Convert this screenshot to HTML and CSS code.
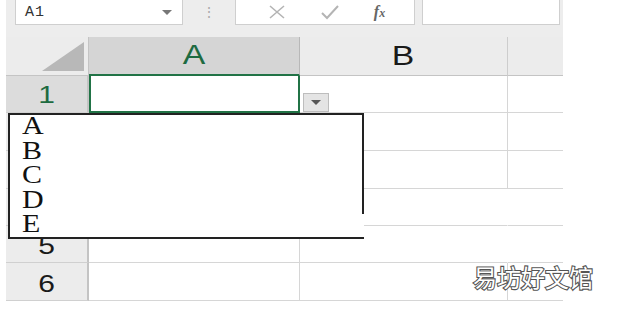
FILE: index.html
```html
<!DOCTYPE html>
<html lang="zh-CN">
<head>
    <meta charset="UTF-8">
    <meta name="viewport" content="width=device-width, initial-scale=1.0">
    <title>Data validation list</title>
    <link rel="stylesheet" href="styles.css">
</head>
<body>

    <div class="sheet">
        <div class="formula-bar">
            <div class="name-box">
                <span class="cell-ref">A1</span>
                <span class="caret"></span>
            </div>
            <div class="grip">&#8942;</div>
            <div class="fx-box">
                <svg class="icon" width="20" height="16" viewBox="0 0 20 16">
                    <path d="M3 2 L17 14 M17 2 L3 14" stroke="#b4b4b4" stroke-width="1.6" fill="none"/>
                </svg>
                <svg class="icon" width="20" height="16" viewBox="0 0 20 16">
                    <path d="M2 9 L7 14 L18 2" stroke="#b4b4b4" stroke-width="2" fill="none"/>
                </svg>
                <span class="fx">f<small>x</small></span>
            </div>
            <div class="input-box"></div>
        </div>

        <div class="grid">
            <div class="corner"><span class="tri"></span></div>
            <div class="col-head active"><span class="stretch">A</span></div>
            <div class="col-head"><span class="stretch">B</span></div>
            <div class="col-head last"></div>

            <div class="row-head active"><span class="stretch">1</span></div>
            <div class="cell selected"></div>
            <div class="cell"></div>
            <div class="cell last"></div>

            <!-- rows 2-4 sit under the open list -->
            <div class="row-head"></div>
            <div class="cell"></div>
            <div class="cell"></div>
            <div class="cell last"></div>

            <div class="row-head"></div>
            <div class="cell"></div>
            <div class="cell"></div>
            <div class="cell last"></div>

            <div class="row-head"></div>
            <div class="cell"></div>
            <div class="cell gap"></div>
            <div class="cell last"></div>

            <div class="row-head"><span class="stretch">5</span></div>
            <div class="cell"></div>
            <div class="cell gap"></div>
            <div class="cell last"></div>

            <div class="row-head"><span class="stretch">6</span></div>
            <div class="cell"></div>
            <div class="cell"></div>
            <div class="cell last"></div>
        </div>

        <div class="drop-btn"><span class="caret dark"></span></div>

        <div class="list-box">
            <ul class="options">
                <li><span class="stretch">A</span></li>
                <li><span class="stretch">B</span></li>
                <li><span class="stretch">C</span></li>
                <li><span class="stretch">D</span></li>
                <li><span class="stretch">E</span></li>
            </ul>
        </div>

        <div class="watermark">易坊好文馆</div>
    </div>

</body>
</html>
```

FILE: styles.css
```css
* {
    margin: 0;
    padding: 0;
    box-sizing: border-box;
}
body {
    background: white;
    font-family: "Liberation Sans", Arial, sans-serif;
    width: 620px;
    height: 309px;
    overflow: hidden;
}
.sheet {
    position: relative;
    margin-left: 6px;
    width: 557px;
    background: #ededed;
}
.formula-bar {
    display: flex;
    height: 37px;
    padding-left: 9px;
}
.name-box {
    width: 168px;
    height: 25px;
    background: white;
    border: 1px solid #cfcfcf;
    border-top: none;
    display: flex;
    align-items: center;
    justify-content: space-between;
    padding: 0 10px 0 9px;
}
.cell-ref {
    font-family: "Liberation Mono", monospace;
    font-size: 15px;
    letter-spacing: 1px;
    color: #333;
}
.caret {
    width: 0;
    height: 0;
    border-left: 5px solid transparent;
    border-right: 5px solid transparent;
    border-top: 5px solid #777;
}
.caret.dark {
    border-top-color: #555;
}
.grip {
    width: 52px;
    text-align: center;
    color: #aaa;
    font-size: 14px;
    line-height: 24px;
}
.fx-box {
    width: 180px;
    height: 25px;
    background: white;
    border: 1px solid #cfcfcf;
    border-top: none;
    display: flex;
    align-items: center;
    justify-content: space-around;
    padding: 0 12px 0 14px;
}
.fx {
    font-family: "Liberation Serif", serif;
    font-style: italic;
    font-weight: bold;
    font-size: 16px;
    color: #666;
}
.fx small {
    font-size: 12px;
}
.input-box {
    width: 138px;
    height: 25px;
    margin-left: 7px;
    background: white;
    border: 1px solid #cfcfcf;
    border-top: none;
}
.grid {
    display: grid;
    grid-template-columns: 83px 211px 208px 55px;
    grid-template-rows: 39px 37px 38px 38px 37px 37px 38px;
    background: white;
}
.corner {
    position: relative;
    background: #ececec;
    border-right: 1px solid #c4c4c4;
    border-bottom: 1px solid #c4c4c4;
}
.tri {
    position: absolute;
    right: 4px;
    bottom: 4px;
    width: 0;
    height: 0;
    border-left: 42px solid transparent;
    border-bottom: 29px solid #b8b8b8;
}
.col-head {
    background: #ececec;
    border-right: 1px solid #cdcdcd;
    border-bottom: 1px solid #c4c4c4;
    display: flex;
    align-items: center;
    justify-content: center;
    font-size: 27px;
    color: #1a1a1a;
}
.col-head.active {
    background: #d5d5d5;
    color: #1e6b41;
    border-right-color: #b8b8b8;
    border-bottom: 2px solid #217346;
}
.col-head.last {
    border-right: none;
}
.row-head {
    background: #ececec;
    border-right: 2px solid #c4c4c4;
    border-bottom: 1px solid #d0d0d0;
    display: flex;
    align-items: center;
    justify-content: center;
    padding-top: 4px;
    font-size: 24px;
    color: #1a1a1a;
}
.row-head.active {
    background: #dcdcdc;
    color: #1e6b41;
    padding-top: 2px;
}
.stretch {
    display: inline-block;
    transform: scaleX(1.25);
}
.cell {
    border-right: 1px solid #d6d6d6;
    border-bottom: 1px solid #d6d6d6;
}
.cell.gap {
    border-right-color: white;
}
.cell.last {
    border-right: none;
}
.cell.selected {
    border: 2px solid #217346;
    border-top: none;
}
.drop-btn {
    position: absolute;
    left: 297px;
    top: 93px;
    width: 26px;
    height: 19px;
    background: #e4e4e4;
    border: 1px solid #bdbdbd;
    display: flex;
    align-items: center;
    justify-content: center;
}
.list-box {
    position: absolute;
    left: 2px;
    top: 113px;
    width: 356px;
    height: 126px;
    background: white;
    border: 2px solid #222;
    border-right: none;
}
.list-box::after {
    content: "";
    position: absolute;
    right: 0;
    top: -2px;
    width: 2px;
    height: 101px;
    background: #222;
}
.options {
    list-style: none;
    margin-top: -1px;
    padding-left: 12px;
    font-family: "Liberation Serif", "Times New Roman", serif;
    font-size: 25px;
    line-height: 24.5px;
    color: #111;
}
.options .stretch {
    transform: scaleX(1.2);
    transform-origin: left center;
}
.watermark {
    position: absolute;
    left: 467px;
    top: 259px;
    font-family: "Noto Sans CJK SC", sans-serif;
    font-size: 24px;
    color: white;
    -webkit-text-stroke: 2.2px #555;
    paint-order: stroke fill;
    white-space: nowrap;
}
```
